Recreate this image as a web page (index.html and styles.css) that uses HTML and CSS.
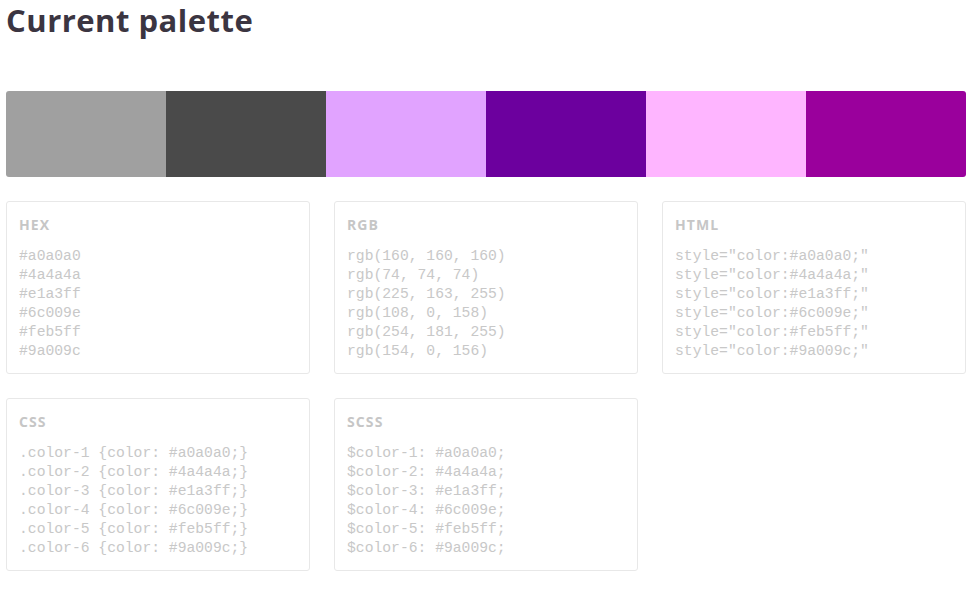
FILE: index.html
```html
<!DOCTYPE html>
<html>
<head>
<meta charset="utf-8">
<link rel="stylesheet" href="styles.css">
</head>
<body>
<h1 class="title">Current palette</h1>
<div class="palette">
  <div class="swatch s1"></div>
  <div class="swatch s2"></div>
  <div class="swatch s3"></div>
  <div class="swatch s4"></div>
  <div class="swatch s5"></div>
  <div class="swatch s6"></div>
</div>
<div class="cards">
  <div class="card">
    <div class="card-title">HEX</div>
    <pre class="code">#a0a0a0
#4a4a4a
#e1a3ff
#6c009e
#feb5ff
#9a009c</pre>
  </div>
  <div class="card">
    <div class="card-title">RGB</div>
    <pre class="code">rgb(160, 160, 160)
rgb(74, 74, 74)
rgb(225, 163, 255)
rgb(108, 0, 158)
rgb(254, 181, 255)
rgb(154, 0, 156)</pre>
  </div>
  <div class="card">
    <div class="card-title">HTML</div>
    <pre class="code">style="color:#a0a0a0;"
style="color:#4a4a4a;"
style="color:#e1a3ff;"
style="color:#6c009e;"
style="color:#feb5ff;"
style="color:#9a009c;"</pre>
  </div>
  <div class="card">
    <div class="card-title">CSS</div>
    <pre class="code">.color-1 {color: #a0a0a0;}
.color-2 {color: #4a4a4a;}
.color-3 {color: #e1a3ff;}
.color-4 {color: #6c009e;}
.color-5 {color: #feb5ff;}
.color-6 {color: #9a009c;}</pre>
  </div>
  <div class="card">
    <div class="card-title">SCSS</div>
    <pre class="code">$color-1: #a0a0a0;
$color-2: #4a4a4a;
$color-3: #e1a3ff;
$color-4: #6c009e;
$color-5: #feb5ff;
$color-6: #9a009c;</pre>
  </div>
</div>
</body>
</html>
```
FILE: styles.css
```css
html, body {
  margin: 0;
  padding: 0;
  background: #ffffff;
}
body {
  padding: 0 8px 0 6px;
  font-family: "Open Sans", Lato, sans-serif;
}
.title {
  margin: 0;
  padding-top: 0;
  font-size: 31px;
  line-height: 40px;
  font-weight: 700;
  color: #3b3541;
  letter-spacing: 0.5px;
}
.palette {
  display: flex;
  width: 960px;
  height: 86px;
  margin-top: 51px;
  border-radius: 3px;
  overflow: hidden;
}
.swatch { flex: 1; }
.s1 { background: #a0a0a0; }
.s2 { background: #4a4a4a; }
.s3 { background: #e1a3ff; }
.s4 { background: #6c009e; }
.s5 { background: #feb5ff; }
.s6 { background: #9a009c; }
.cards {
  display: grid;
  grid-template-columns: 304px 304px 304px;
  column-gap: 24px;
  row-gap: 24px;
  margin-top: 24px;
  width: 960px;
}
.card {
  border: 1px solid #e8e8e8;
  border-radius: 3px;
  padding: 15px 12px 12px 12px;
  height: 173px;
  box-sizing: border-box;
}
.card-title {
  font-size: 14px;
  font-weight: 700;
  letter-spacing: 1.1px;
  color: #c6c6c6;
  line-height: 16px;
}
.code {
  margin: 14px 0 0 0;
  font-family: "Liberation Mono", "Courier New", monospace;
  font-size: 14.7px;
  line-height: 19px;
  color: #c8c8c8;
}
```
